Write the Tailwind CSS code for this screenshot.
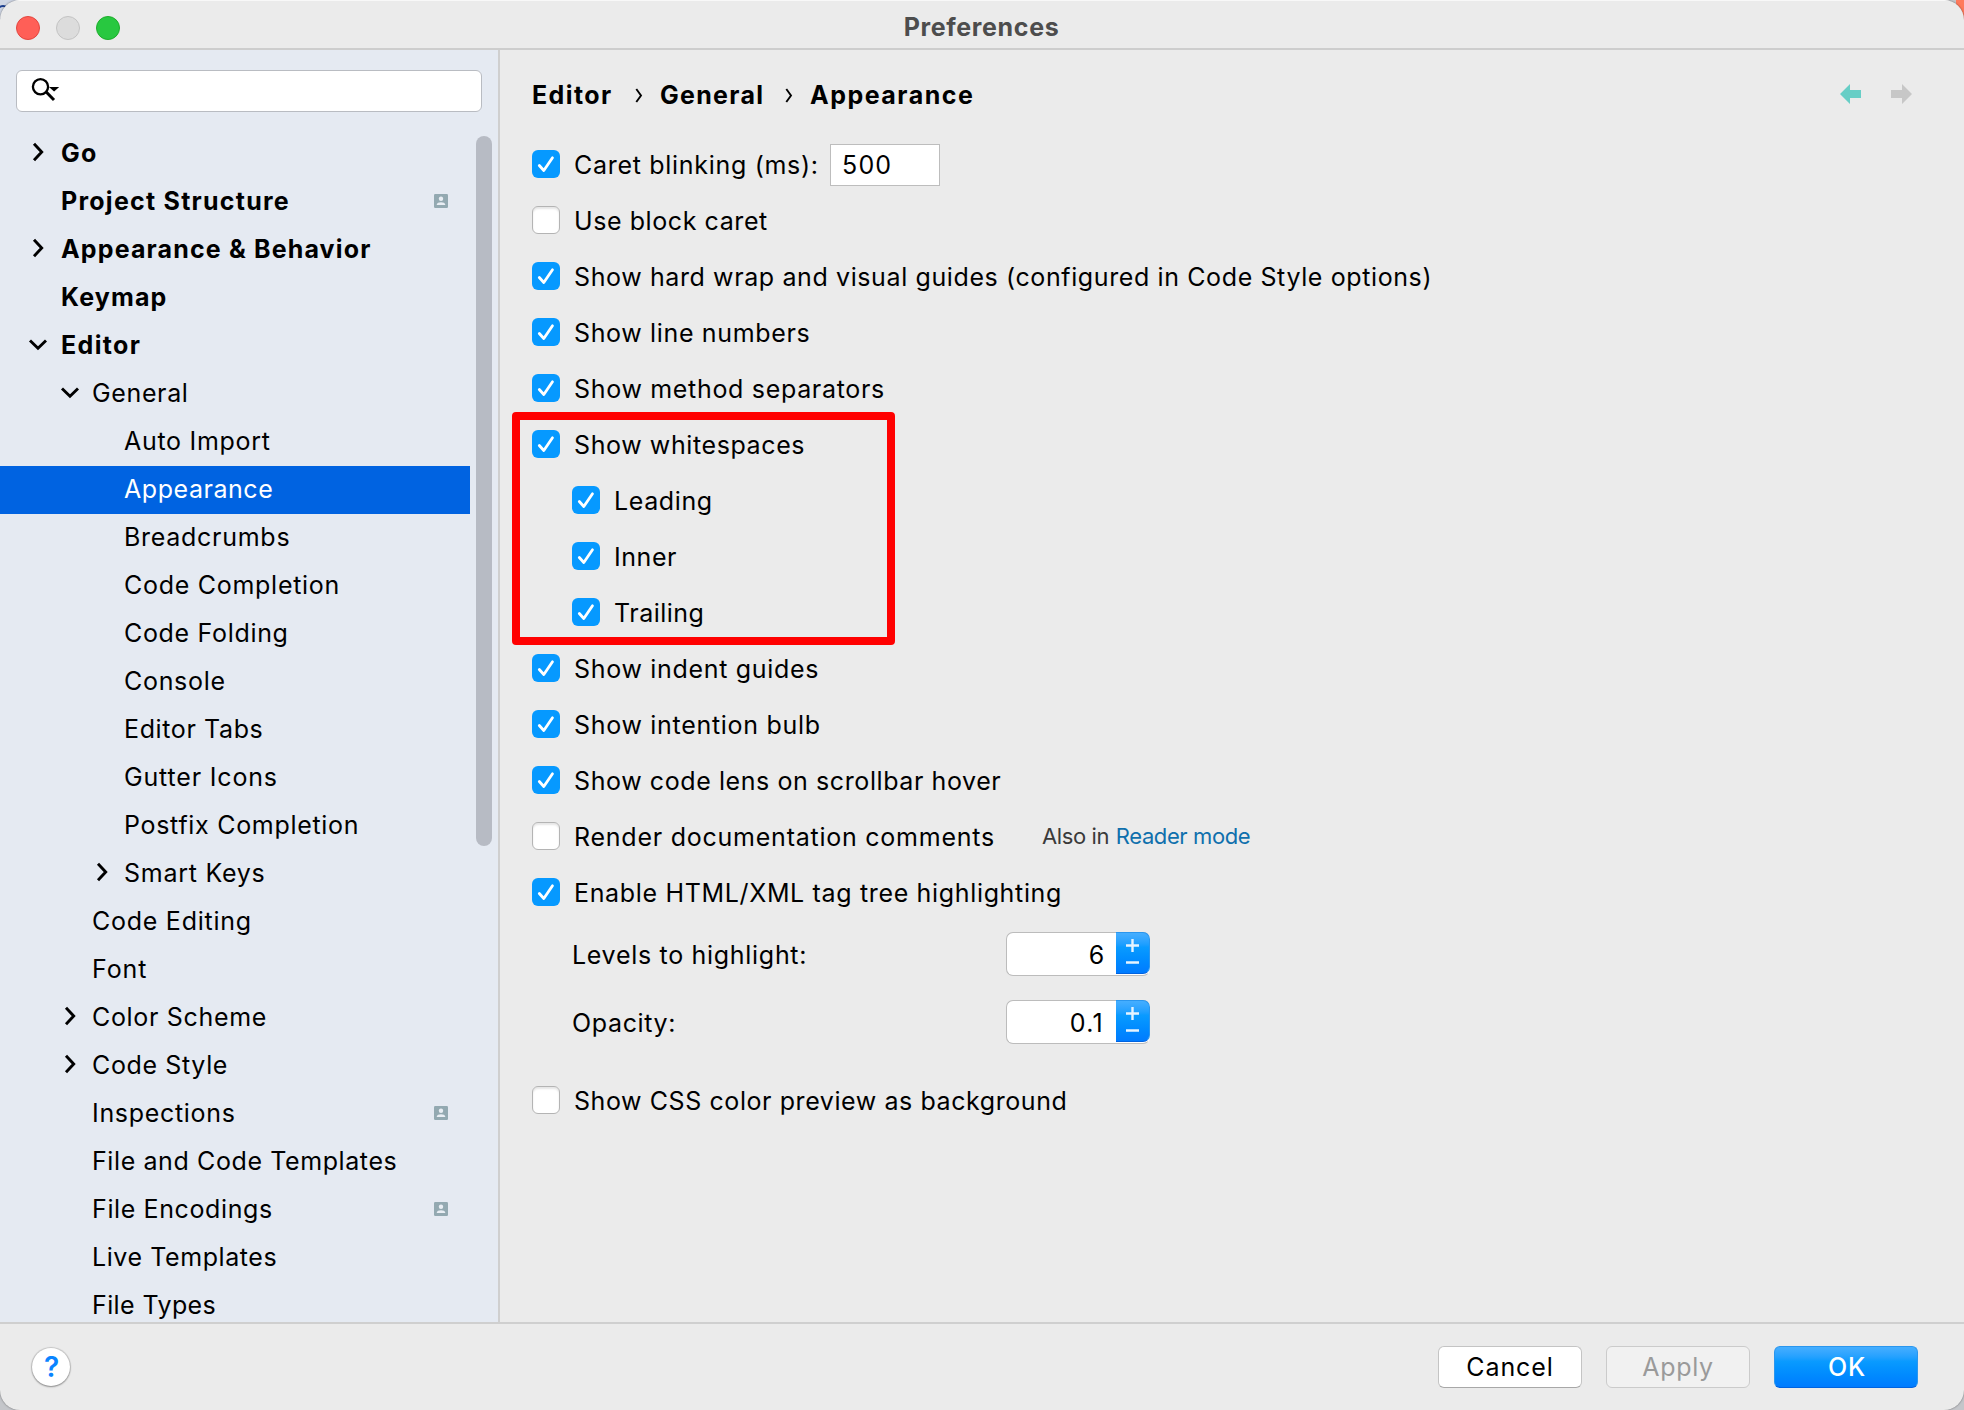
<!DOCTYPE html>
<html lang="en">
<head>
<meta charset="utf-8">
<title>Preferences</title>
<script src="https://cdn.jsdelivr.net/npm/@tailwindcss/browser@4"></script>
</head>
<body class="relative h-[1410px] w-[1964px] overflow-hidden bg-[#c4c6ca] font-['Inter',sans-serif] text-[25px] leading-none tracking-[0.68px] text-black">
<!-- desktop behind the window corners -->
<div class="absolute top-0 left-0 h-5 w-5 bg-[#cfd6e4]"></div>
<div class="absolute top-[5px] -left-1 h-4 w-[14px] rounded-full border-2 border-[#1c3f8f]"></div>
<div class="absolute top-0 right-0 h-5 w-2 bg-[#ff7a5c]"></div>

<div class="relative flex h-full flex-col overflow-hidden rounded-[20px] bg-[#ebebeb] shadow-[0_0_2px_rgba(0,0,0,0.5)]">
  <header class="relative flex h-[50px] shrink-0 items-center justify-center border-t border-b-2 border-t-[#f8f8f8] border-b-[#cdcdcd]">
    <div class="absolute top-[15px] left-4 flex gap-4">
      <span class="size-6 rounded-full border border-[#e2463f] bg-[#ff5f57]"></span>
      <span class="size-6 rounded-full border border-[#c3c3c3] bg-[#dcdcdc]"></span>
      <span class="size-6 rounded-full border border-[#1dad2b] bg-[#28c840]"></span>
    </div>
    <h1 class="pt-[5px] pr-px text-[25px] font-bold tracking-[0.65px] text-[#4d4d4d]">Preferences</h1>
  </header>

  <div class="flex h-[1272px] shrink-0">
    <aside class="flex w-[500px] shrink-0 flex-col border-r-2 border-[#cfcfcf] bg-[#e5eaf2]">
      <div class="mt-5 ml-4 h-[42px] w-[466px] shrink-0 rounded-md border border-[#b9bcc2] bg-white">
        <svg class="mt-[5px] ml-[13px] h-[28px] w-[32px]" viewBox="0 0 32 28" fill="none"><circle cx="10.5" cy="10.8" r="7.6" stroke="#000" stroke-width="2.3"/><path d="M16 15.8 24 24" stroke="#000" stroke-width="3"/><path d="M19 11h10.200l-5.100 4.600z" fill="#000"/></svg>
      </div>
      <div class="mt-[18px] flex min-h-0 flex-1 overflow-hidden">
        <nav id="tree" class="w-[470px]"></nav>
        <div class="mt-[6px] ml-[6px] h-[710px] w-4 rounded-full bg-[#b7bbc4]"></div>
      </div>
    </aside>

    <main class="relative flex-1 pl-8">
      <div class="flex h-[86px] items-center pt-[5px] pr-[52px] font-bold">
        <span class="w-[103px] tracking-[1.4px]">Editor</span>
        <svg class="h-4 w-[9px]" viewBox="0 0 9 16" fill="none" stroke="#000" stroke-width="1.9"><path d="M1.300 1 6 7.500l-4.700 6.500"/></svg>
        <span class="ml-4 w-[124px] tracking-[1.3px]">General</span>
        <svg class="h-4 w-[9px]" viewBox="0 0 9 16" fill="none" stroke="#000" stroke-width="1.900"><path d="M2.300 1 7 7.500l-4.700 6.500"/></svg>
        <span class="ml-[17px] tracking-[1.5px]">Appearance</span>
        <svg class="mb-1 ml-auto h-5 w-[21px]" viewBox="0 0 21 20"><path d="M0 10 10 0v6h11v8H10v6z" fill="#67cec6"/></svg>
        <svg class="mb-1 ml-[30px] h-5 w-[21px]" viewBox="0 0 21 20"><path d="M21 10 11 0v6H0v8h11v6z" fill="#c7c7c7"/></svg>
      </div>
      <div id="options"></div>
      <div class="flex h-[68px] items-center pl-10">
        <span class="w-[434px] pt-0.5 tracking-[0.7px]">Levels to highlight:</span>
        <div class="spin flex h-11 w-36 rounded-[7px] border border-[#bcbcbc] border-r-transparent bg-white"><span class="flex-1 self-center pt-0.5 pr-[11px] text-right">6</span></div>
      </div>
      <div class="flex h-[68px] items-center pl-10">
        <span class="w-[434px] pt-0.5 tracking-[0.65px]">Opacity:</span>
        <div class="spin flex h-11 w-36 rounded-[7px] border border-[#bcbcbc] border-r-transparent bg-white"><span class="flex-1 self-center pt-0.5 pr-3 text-right tracking-[1.3px]">0.1</span></div>
      </div>
      <div id="css" class="mt-4"></div>
      <!-- highlight frame -->
      <div class="absolute top-[362px] left-[12px] h-[233px] w-[383px] rounded-[4px] border-8 border-[#ff0000]"></div>
    </main>
  </div>

  <footer class="flex flex-1 items-center border-t-2 border-[#cfcfcf] pr-[46px] pl-8">
    <button class="flex size-[38px] items-center justify-center rounded-full bg-white pl-px text-[28px] font-semibold tracking-normal text-[#0a84ff] shadow-[0_0_1px_1px_rgba(0,0,0,0.15),0_1px_2px_rgba(0,0,0,0.3)]">?</button>
    <div class="ml-auto flex gap-6">
      <button class="h-[42px] w-36 rounded-md border border-[#c4c4c4] border-b-[#a8a8a8] bg-white tracking-[0.9px]">Cancel</button>
      <button class="h-[42px] w-36 rounded-md border border-[#cbcbcb] bg-[#f1f1f1] tracking-[0.7px] text-[#9a9a9a]">Apply</button>
      <button class="h-[42px] w-36 rounded-md border border-[#2a96ee] border-b-[#0063e0] bg-linear-to-b from-[#45aeff] via-[#0a9bff] via-35% to-[#007bff] pl-0.5 font-medium tracking-[0.7px] text-white">OK</button>
    </div>
  </footer>
</div>

<script>
// [label, level, arrow, tracking, badge]
const rows = [
  ['Go', 0, 'r', 'tracking-[1.3px]'],
  ['Project Structure', 0, '', 'tracking-[1.25px]', 1],
  ['Appearance & Behavior', 0, 'r', 'tracking-[1.15px]'],
  ['Keymap', 0, '', 'tracking-[1.15px]'],
  ['Editor', 0, 'd', 'tracking-[1.35px]'],
  ['General', 1, 'd', 'tracking-[0.63px]'],
  ['Auto Import', 2, '', 'tracking-[0.7px]'],
  ['Appearance', 2, '', 'tracking-[0.55px]'],
  ['Breadcrumbs', 2, '', 'tracking-[0.72px]'],
  ['Code Completion', 2, '', 'tracking-[0.72px]'],
  ['Code Folding', 2, '', 'tracking-[0.68px]'],
  ['Console', 2, '', 'tracking-[0.7px]'],
  ['Editor Tabs', 2, '', 'tracking-[0.62px]'],
  ['Gutter Icons', 2, '', 'tracking-[0.83px]'],
  ['Postfix Completion', 2, '', 'tracking-[0.7px]'],
  ['Smart Keys', 2, 'r', 'tracking-[0.74px]'],
  ['Code Editing', 1, '', 'tracking-[0.74px]'],
  ['Font', 1, '', 'tracking-[0.9px]'],
  ['Color Scheme', 1, 'r', 'tracking-[0.68px]'],
  ['Code Style', 1, 'r', 'tracking-[0.64px]'],
  ['Inspections', 1, '', 'tracking-[0.68px]', 1],
  ['File and Code Templates', 1, '', 'tracking-[0.6px]'],
  ['File Encodings', 1, '', 'tracking-[0.62px]', 1],
  ['Live Templates', 1, '', 'tracking-[0.58px]'],
  ['File Types', 1, '', 'tracking-[0.4px]'],
];
const indent = ['pl-[26px]', 'pl-[58px]', 'pl-[90px]'];
const arrows = { r: 'M8 2.800 15.700 11l-7.700 8.200', d: 'M4 7.500 12 15.200 20 7.500', '': '' };
const badge = '<svg class="mr-[22px] mb-0.5 ml-auto size-[14px]" viewBox="0 0 14 14"><rect width="14" height="14" rx="1.2" fill="#93a9b1"/><circle cx="7" cy="4.800" r="2.200" fill="#e9eef4"/><path d="M2.700 11c0-2 2.200-2.700 4.300-2.700s4.300.7 4.300 2.700z" fill="#e9eef4"/></svg>';
document.getElementById('tree').innerHTML = rows.map(([t, l, a, tr, b]) => `
  <div class="flex h-12 items-center ${indent[l]} ${l ? '' : 'font-bold'} ${t === 'Appearance' ? 'bg-[#0063e1] text-white' : ''}">
    <svg class="mb-[3px] h-6 w-[34px] shrink-0" viewBox="0 0 34 24" fill="none" stroke="#000" stroke-width="2.900"><path d="${arrows[a]}"/></svg>
    <span class="pb-0.5 whitespace-nowrap ${l ? '' : 'pl-px'} ${tr}">${t.replace('&', '&amp;')}</span>${b ? badge : ''}
  </div>`).join('');

const on = '<span class="flex size-7 shrink-0 items-center justify-center rounded-[6px] bg-[#0699ff]"><svg class="size-7" viewBox="0 0 28 28" fill="none" stroke="#fff" stroke-width="2.800" stroke-linecap="round" stroke-linejoin="round"><path d="M7.300 15.500 11.800 20.500 20.500 7.800"/></svg></span>';
const off = '<span class="size-7 shrink-0 rounded-[6px] border border-[#b4b4b4] bg-white shadow-[inset_0_2px_2px_rgba(0,0,0,0.1)]"></span>';
const check = (t, c, tr, sub, extra) => `
  <div class="flex h-14 items-center gap-[14px] ${sub ? 'pl-10' : ''}">${c ? on : off}<span class="whitespace-nowrap pt-[3px] ${tr}">${t}</span>${extra || ''}</div>`;
document.getElementById('options').innerHTML = [
  ['Caret blinking (ms):', 1, 'tracking-[0.7px] w-[242px]', 0, '<span class="mt-0.5 flex h-[42px] w-[110px] items-center border border-[#bdbdbd] bg-white pl-[11px] tracking-[1.200px]">500</span>'],
  ['Use block caret', 0, 'tracking-[0.58px]'],
  ['Show hard wrap and visual guides (configured in Code Style options)', 1, 'tracking-[0.61px]'],
  ['Show line numbers', 1, 'tracking-[0.65px]'],
  ['Show method separators', 1, 'tracking-[0.68px]'],
  ['Show whitespaces', 1, 'tracking-[0.6px]'],
  ['Leading', 1, 'tracking-[0.62px]', 1],
  ['Inner', 1, 'tracking-[0.55px]', 1],
  ['Trailing', 1, 'tracking-[0.5px]', 1],
  ['Show indent guides', 1, 'tracking-[0.69px]'],
  ['Show intention bulb', 1, 'tracking-[0.7px]'],
  ['Show code lens on scrollbar hover', 1, 'tracking-[0.59px]'],
  ['Render documentation comments', 0, 'tracking-[0.76px] w-[454px]', 0, '<span class="text-[22px] tracking-[-0.4px] whitespace-nowrap text-[#3a3a3a]">Also in <a class="ml-px text-[#0f70ad]">Reader mode</a></span>'],
  ['Enable HTML/XML tag tree highlighting', 1, 'tracking-[0.66px]'],
].map(r => check(...r)).join('');
document.getElementById('css').innerHTML = check('Show CSS color preview as background', 0, 'tracking-[0.58px]');

document.querySelectorAll('.spin').forEach(s => s.insertAdjacentHTML('beforeend',
  '<span class="-mt-px -mr-px h-[42px] w-[34px] rounded-r-[7px] border border-l-0 border-[#2a96ee] border-b-[#0063e0] bg-linear-to-b from-[#45aeff] via-[#0a9bff] via-35% to-[#007bff]"><svg class="h-10 w-[33px]" viewBox="0 0 33 40" stroke="#e6f4ff" stroke-width="2.400"><path d="M10 12.500h13M16.500 6v13M10 29.500h13"/></svg></span>'));
</script>
</body>
</html>
